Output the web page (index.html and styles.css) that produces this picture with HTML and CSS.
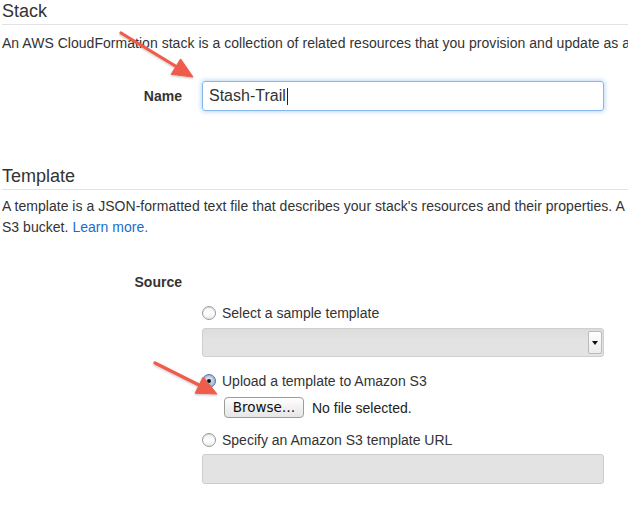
FILE: index.html
```html
<!DOCTYPE html>
<html>
<head>
<meta charset="utf-8">
<link rel="stylesheet" href="styles.css">
</head>
<body>
<div class="page">
  <h2 class="section-title">Stack</h2>
  <p class="desc desc-stack">An AWS CloudFormation stack is a collection of related resources that you provision and update as a single unit.</p>
  <div class="form-row name-row">
    <div class="label">Name</div>
    <div class="text-input focused"><span class="value">Stash-Trail</span><span class="caret"></span></div>
  </div>

  <h2 class="section-title template-title">Template</h2>
  <p class="desc desc-template">A template is a JSON-formatted text file that describes your stack's resources and their properties. A template can be stored in an Amazon<br>S3 bucket. <a class="link" href="#">Learn more.</a></p>

  <div class="form-row source-row">
    <div class="label">Source</div>
    <div></div>
  </div>
  <div class="form-row">
    <div></div>
    <div class="options">
      <div class="radio-row"><span class="radio"></span><span>Select a sample template</span></div>
      <div class="select"><span class="select-btn"><span class="tri"></span></span></div>
      <div class="radio-row upload"><span class="radio checked"></span><span>Upload a template to Amazon S3</span></div>
      <div class="file-row"><span class="browse">Browse…</span><span class="nofile">No file selected.</span></div>
      <div class="radio-row specify"><span class="radio"></span><span>Specify an Amazon S3 template URL</span></div>
      <div class="disabled-input"></div>
    </div>
  </div>
</div>

<svg class="arrows" width="628" height="520" viewBox="0 0 628 520">
  <defs>
    <filter id="sh" x="-20%" y="-20%" width="140%" height="140%">
      <feDropShadow dx="0" dy="1" stdDeviation="0.8" flood-color="#000" flood-opacity="0.25"/>
    </filter>
  </defs>
  <g fill="#ef5b4b" stroke="#ef5b4b" filter="url(#sh)">
    <line x1="121" y1="33" x2="177" y2="67" stroke-width="3.2" stroke-linecap="round"/>
    <polygon points="193,77 180.6,58.9 171.2,74.3" stroke-width="1" stroke-linejoin="round"/>
    <line x1="155" y1="363" x2="200" y2="385.5" stroke-width="3.2" stroke-linecap="round"/>
    <polygon points="217,394 203.1,377 195.1,393.2" stroke-width="1" stroke-linejoin="round"/>
  </g>
</svg>
</body>
</html>
```

FILE: styles.css
```css
html, body {
  margin: 0;
  padding: 0;
  background: #fff;
  overflow: hidden;
  width: 628px;
  height: 520px;
}

body {
  position: relative;
  font-family: "Liberation Sans", Arial, sans-serif;
  color: #333;
}

.page {
  width: 800px;
  padding-left: 2px;
}

.section-title {
  margin: 0;
  font-size: 18px;
  font-weight: normal;
  line-height: 22px;
  padding-bottom: 2px;
  border-bottom: 1px solid #e3e3e3;
  color: #333;
}

.template-title {
  margin-top: 54px;
}

.desc {
  margin: 0;
  font-size: 14px;
  letter-spacing: 0.03px;
  white-space: nowrap;
}

.desc-stack {
  margin-top: 9px;
  line-height: 18px;
}

.desc-template {
  margin-top: 6px;
  line-height: 21px;
}

.link {
  color: #1a6ccc;
  text-decoration: none;
}

.form-row {
  display: grid;
  grid-template-columns: 180px 402px;
  column-gap: 20px;
  align-items: center;
}

.label {
  text-align: right;
  font-weight: bold;
  font-size: 14px;
  line-height: 20px;
  color: #333;
}

.name-row {
  margin-top: 29px;
}

.text-input {
  box-sizing: border-box;
  height: 30px;
  border: 1px solid #ccc;
  border-radius: 3px;
  padding-left: 6px;
  display: flex;
  align-items: center;
  font-size: 16px;
  color: #333;
}

.text-input.focused {
  border-color: #86b6ea;
  box-shadow: 0 0 4px 1px rgba(110, 170, 235, 0.45);
}

.caret {
  display: inline-block;
  width: 1px;
  height: 17px;
  background: #222;
  margin-left: 1px;
}

.source-row {
  margin-top: 34px;
}

.options {
  margin-top: 11px;
  display: flex;
  flex-direction: column;
  align-items: flex-start;
}

.radio-row {
  display: flex;
  align-items: center;
  gap: 6px;
  font-size: 14px;
  line-height: 20px;
  color: #333;
}

.radio {
  box-sizing: border-box;
  width: 14px;
  height: 14px;
  border-radius: 50%;
  border: 1px solid #9a9a9a;
  background: linear-gradient(#f4f4f4, #ffffff 60%, #e8e8e8);
  box-shadow: inset 0 1px 1px rgba(0,0,0,0.12);
  position: relative;
}

.radio.checked {
  border-color: #5f7396;
  background: radial-gradient(circle at 50% 40%, #e2ecfb, #9fb8de 70%, #7f9cc8);
}

.radio.checked::after {
  content: "";
  position: absolute;
  left: 4px;
  top: 4px;
  width: 4px;
  height: 4px;
  border-radius: 50%;
  background: #111;
}

.select {
  box-sizing: border-box;
  margin-top: 5px;
  width: 402px;
  height: 29px;
  border: 1px solid #cfcfcf;
  border-radius: 3px;
  background: linear-gradient(#dcdcdc, #e3e3e3 40%, #e3e3e3);
  display: flex;
  justify-content: flex-end;
  align-items: stretch;
}

.select-btn {
  box-sizing: border-box;
  width: 14px;
  margin: 2px 1px 2px 0;
  border: 1px solid #bbb;
  border-radius: 2px;
  background: linear-gradient(#ffffff, #ececec);
  display: flex;
  align-items: center;
  justify-content: center;
}

.tri {
  width: 0;
  height: 0;
  border-left: 3px solid transparent;
  border-right: 3px solid transparent;
  border-top: 4px solid #111;
}

.upload {
  margin-top: 14px;
}

.file-row {
  margin-top: 6px;
  margin-left: 22px;
  display: flex;
  align-items: center;
  gap: 8px;
}

.browse {
  box-sizing: border-box;
  width: 80px;
  height: 21px;
  border: 1px solid #9c9c9c;
  border-radius: 4px;
  background: linear-gradient(#ffffff, #f1f1f1 50%, #e6e6e6);
  font-family: "DejaVu Sans", sans-serif;
  font-size: 13.5px;
  line-height: 19px;
  text-align: center;
  color: #111;
}

.nofile {
  font-size: 14px;
  color: #222;
}

.specify {
  margin-top: 12px;
}

.disabled-input {
  box-sizing: border-box;
  margin-top: 4px;
  width: 402px;
  height: 30px;
  border: 1px solid #cdcdcd;
  border-radius: 3px;
  background: #e3e3e3;
}

.arrows {
  position: absolute;
  left: 0;
  top: 0;
  pointer-events: none;
}
```
